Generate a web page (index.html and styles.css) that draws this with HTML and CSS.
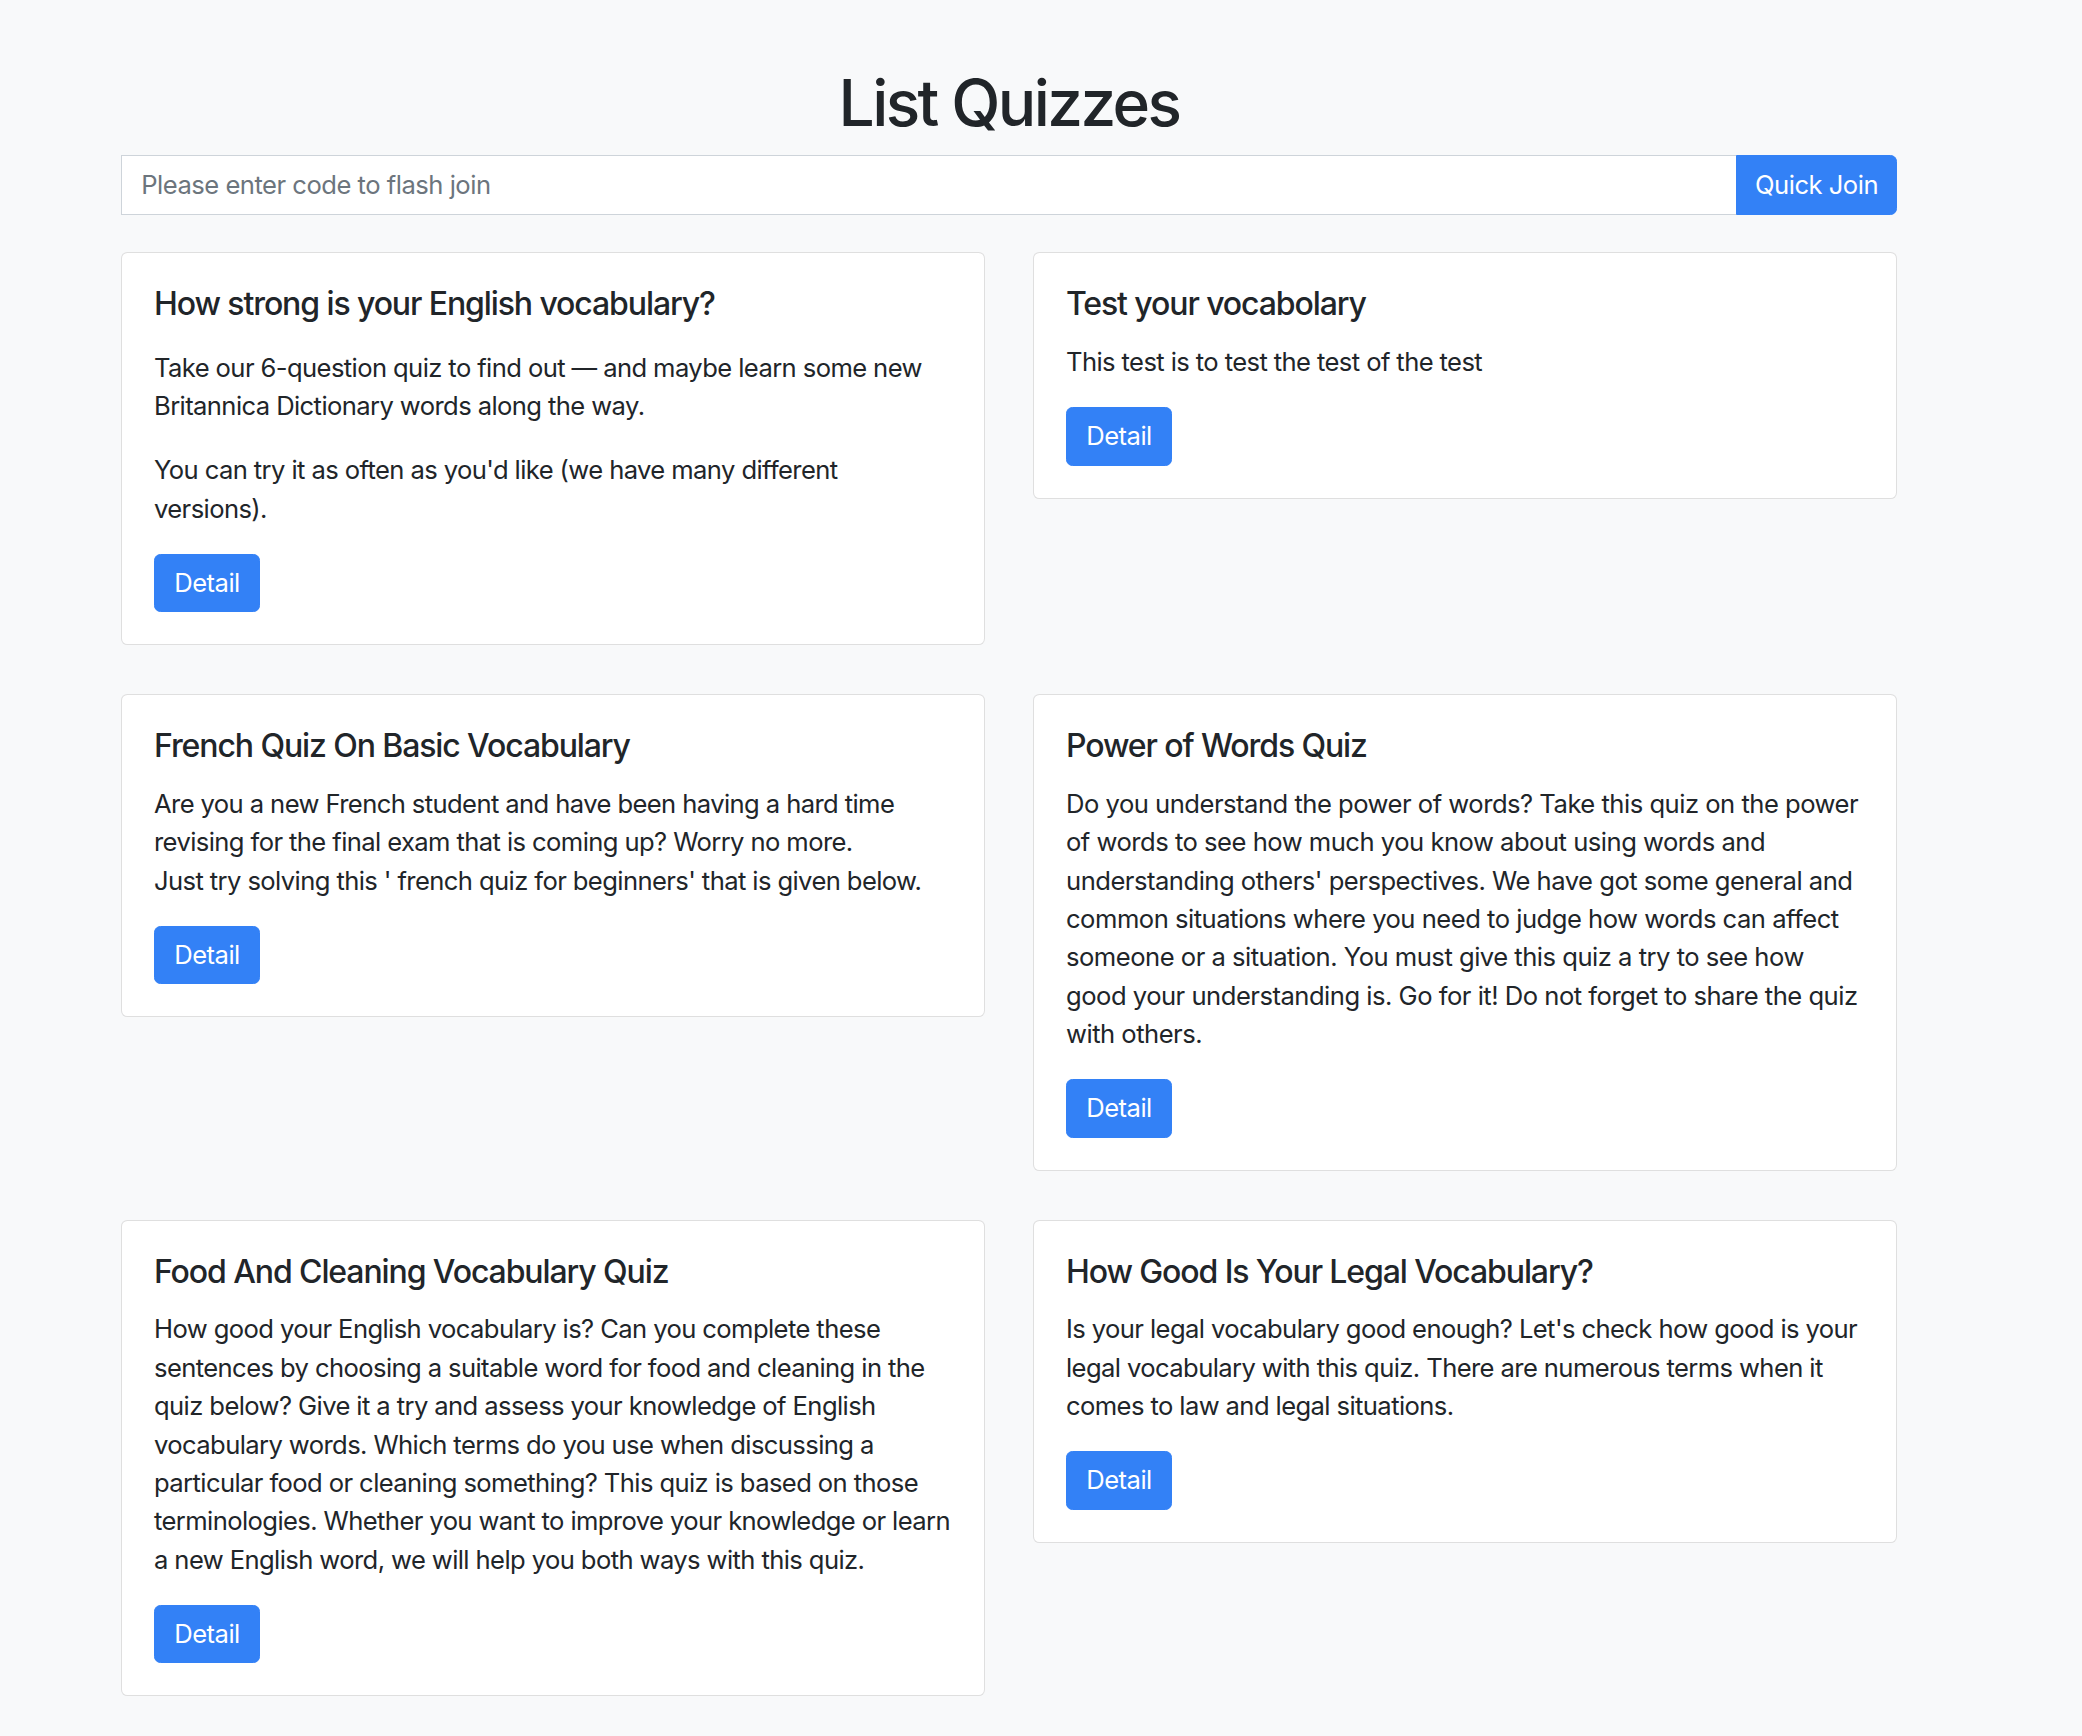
FILE: index.html
```html
<!DOCTYPE html>
<html lang="en">
<head>
<meta charset="utf-8">
<title>List Quizzes</title>
<link rel="stylesheet" href="styles.css">
</head>
<body>
<main class="container">
  <h1 class="page-title">List Quizzes</h1>
  <form class="join-group" onsubmit="return false">
    <input class="join-input" type="text" placeholder="Please enter code to flash join">
    <button class="btn btn-join" type="submit">Quick Join</button>
  </form>
  <div class="quiz-grid">
    <div class="card">
      <h5 class="card-title">How strong is your English vocabulary?</h5>
      <div class="card-desc card-desc-rich">
        <p>Take our 6-question quiz to find out — and maybe learn some new Britannica Dictionary words along the way.</p>
        <p>You can try it as often as you'd like (we have many different versions).</p>
      </div>
      <a class="btn btn-detail" href="#">Detail</a>
    </div>
    <div class="card">
      <h5 class="card-title">Test your vocabolary</h5>
      <div class="card-desc"><p>This test is to test the test of the test</p></div>
      <a class="btn btn-detail" href="#">Detail</a>
    </div>
    <div class="card">
      <h5 class="card-title">French Quiz On Basic Vocabulary</h5>
      <div class="card-desc"><p>Are you a new French student and have been having a hard time revising for the final exam that is coming up? Worry no more.<br>Just try solving this ' french quiz for beginners' that is given below.</p></div>
      <a class="btn btn-detail" href="#">Detail</a>
    </div>
    <div class="card">
      <h5 class="card-title">Power of Words Quiz</h5>
      <div class="card-desc card-desc-loose"><p>Do you understand the power of words? Take this quiz on the power of words to see how much you know about using words and understanding others' perspectives. We have got some general and common situations where you need to judge how words can affect someone or a situation. You must give this quiz a try to see how good your understanding is. Go for it! Do not forget to share the quiz with others.</p></div>
      <a class="btn btn-detail" href="#">Detail</a>
    </div>
    <div class="card">
      <h5 class="card-title">Food And Cleaning Vocabulary Quiz</h5>
      <div class="card-desc"><p>How good your English vocabulary is? Can you complete these sentences by choosing a suitable word for food and cleaning in the quiz below? Give it a try and assess your knowledge of English vocabulary words. Which terms do you use when discussing a particular food or cleaning something? This quiz is based on those terminologies. Whether you want to improve your knowledge or learn a new English word, we will help you both ways with this quiz.</p></div>
      <a class="btn btn-detail" href="#">Detail</a>
    </div>
    <div class="card">
      <h5 class="card-title">How Good Is Your Legal Vocabulary?</h5>
      <div class="card-desc"><p>Is your legal vocabulary good enough? Let's check how good is your legal vocabulary with this quiz. There are numerous terms when it comes to law and legal situations.</p></div>
      <a class="btn btn-detail" href="#">Detail</a>
    </div>
  </div>
</main>
</body>
</html>
```
FILE: styles.css
```css
* { box-sizing: border-box; }

html, body {
  margin: 0;
  background: #f8f9fa;
}

body {
  font-family: Inter, "Liberation Sans", Arial, sans-serif;
  font-size: 25.6px;
  line-height: 1.5;
  letter-spacing: -0.6px;
  color: #212529;
}

.container {
  width: 1776px;
  margin: 0 0 0 121px;
  padding: 65px 0 60px;
}

.page-title {
  margin: 0 0 12.8px;
  font-size: 64px;
  font-weight: 500;
  line-height: 1.2;
  letter-spacing: -2.6px;
  text-align: center;
}

.join-group {
  display: flex;
  margin: 0 0 37px;
  height: 60.8px;
}

.join-input {
  flex: 1;
  min-width: 0;
  height: 100%;
  padding: 9.6px 19.2px;
  font: inherit;
  letter-spacing: -0.5px;
  color: #495057;
  background: #fff;
  border: 1px solid #ced4da;
  border-right: 0;
  border-radius: 0;
  outline: none;
}

.join-input::placeholder { color: #6c757d; }

.btn {
  display: inline-flex;
  align-items: center;
  justify-content: center;
  white-space: nowrap;
  font: inherit;
  letter-spacing: -0.5px;
  color: #fff;
  background: #3381f6;
  border: 1px solid #3381f6;
  text-decoration: none;
  cursor: pointer;
}

.btn-join {
  width: 161px;
  height: 100%;
  padding: 0 18px;
  border-radius: 0 6.4px 6.4px 0;
}

.quiz-grid {
  display: grid;
  grid-template-columns: 1fr 1fr;
  column-gap: 48px;
  row-gap: 49px;
  align-items: start;
}

.card {
  display: flex;
  flex-direction: column;
  align-items: flex-start;
  background: #fff;
  border: 1px solid rgba(0, 0, 0, 0.125);
  border-radius: 6.4px;
  padding: 32px;
}

.card-title {
  margin: 0 0 19.2px;
  font-size: 32px;
  font-weight: 500;
  line-height: 1.2;
  letter-spacing: -1.1px;
}

.card-desc p {
  margin: 0 0 25.6px;
}

.card-desc-rich { margin-top: 6px; }

.card-desc-loose { letter-spacing: -0.5px; }

.btn-detail {
  width: 106px;
  height: 58.6px;
  padding: 0;
  border-radius: 6.4px;
}
```
